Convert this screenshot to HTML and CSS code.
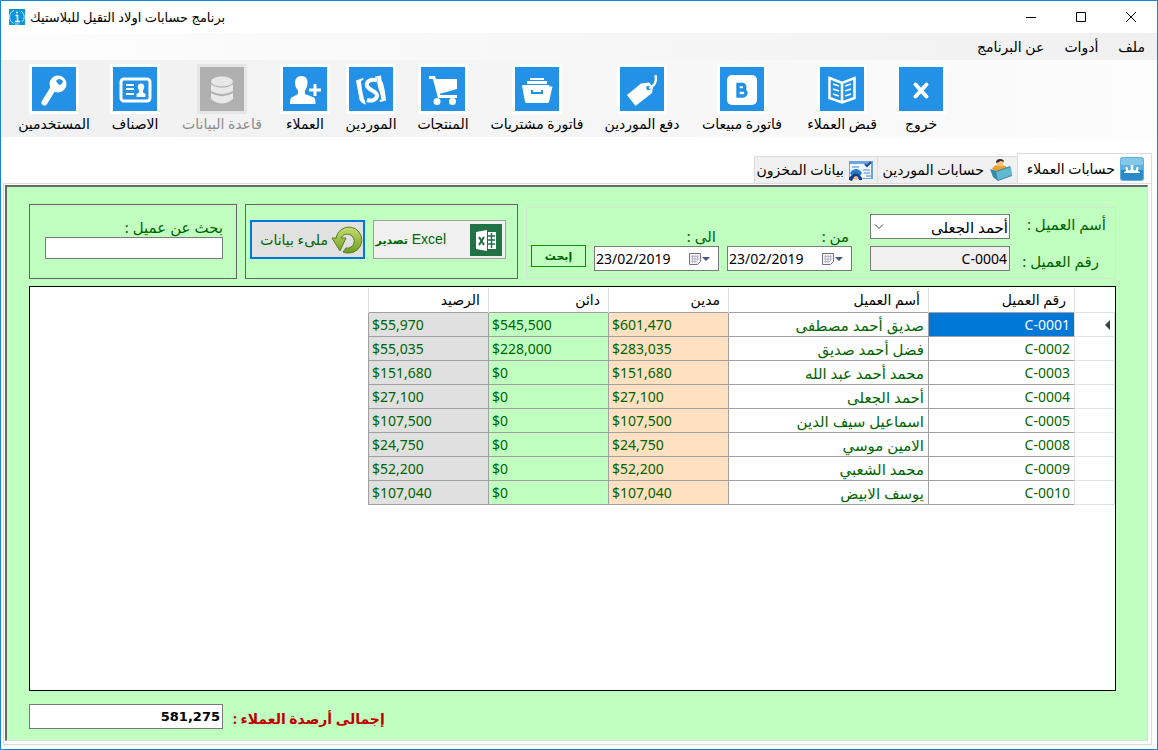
FILE: index.html
```html
<!DOCTYPE html>
<html lang="ar" dir="rtl">
<head>
    <meta charset="UTF-8">
    <meta name="viewport" content="width=device-width, initial-scale=1.0">
    <title>برنامج حسابات اولاد التقيل للبلاستيك</title>
    <link rel="stylesheet" href="styles.css">
</head>
<body>
<div class="window">
    <header class="titlebar" dir="ltr">
        <svg class="app-icon" viewBox="0 0 16 16">
            <rect width="16" height="16" fill="#0a94dc"/>
            <path d="M5 1.500A7 7 0 0 0 5 14.500M6 15h4M12 2a7 7 0 0 1 1 11" fill="none" stroke="#bfe6fa"/>
            <path d="M7 3.500h2M6.500 6.500H8.500V12M6 12.500h5" fill="none" stroke="#fff" stroke-width="1.500"/>
        </svg>
        <h1 class="title" dir="rtl">برنامج حسابات اولاد التقيل للبلاستيك</h1>
        <div class="win-btns">
            <button type="button" aria-label="تصغير"><svg viewBox="0 0 12 12"><path d="M1 6.500h10"/></svg></button>
            <button type="button" aria-label="تكبير"><svg viewBox="0 0 12 12"><path d="M1.500 1.500h9v9h-9z"/></svg></button>
            <button type="button" aria-label="إغلاق"><svg viewBox="0 0 12 12"><path d="M1 1l10 10M11 1L1 11"/></svg></button>
        </div>
    </header>

    <nav class="menubar">
        <a href="#">ملف</a>
        <a href="#">أدوات</a>
        <a href="#">عن البرنامج</a>
    </nav>

    <div class="toolbar">
        <button type="button" class="tool">
            <svg viewBox="0 0 44 44"><path d="M16.500 17.500l11 12M27.500 17.500l-11 12" stroke="#fff" stroke-width="4" stroke-linecap="round"/></svg>
            <span>خروج</span>
        </button>
        <button type="button" class="tool">
            <svg viewBox="0 0 44 44"><path d="M9.500 11l12.500 5 12.500-5v20L22 35.500 9.500 31zM22 16v19" fill="none" stroke="#fff" stroke-width="2.500"/><path d="M13 17l6 2M13 22l6 2M13 27l6 2M31 17l-6 2M31 22l-6 2M31 27l-6 2" stroke="#fff" stroke-width="1.800"/></svg>
            <span>قبض العملاء</span>
        </button>
        <button type="button" class="tool">
            <svg viewBox="0 0 44 44"><rect x="7" y="8" width="30" height="30" rx="5" fill="#fff"/><path d="M18 17.500h4.500a2.800 2.800 0 0 1 0 5.500H18zM18 23h5a3 3 0 0 1 0 6H18z" fill="none" stroke="#2391e6" stroke-width="3.400"/></svg>
            <span>فاتورة مبيعات</span>
        </button>
        <button type="button" class="tool">
            <svg viewBox="0 0 44 44"><path d="M7 28l14-11.500 8-1 4 4.500-1 6-16.500 13z" fill="#fff"/><circle cx="28.500" cy="21" r="2.300" fill="#2391e6"/><path d="M29 21c6-2 8-6 6.500-13" fill="none" stroke="#fff" stroke-width="2.200"/></svg>
            <span>دفع الموردين</span>
        </button>
        <button type="button" class="tool">
            <svg viewBox="0 0 44 44"><path d="M15 11h14v2H15zM12 14h20v3H12zM10 18h24l.500 1.500h3L34 35q-.500 1-1.500 1h-21q-1 0-1.500-1L7 18.500 8.500 18z" fill="#fff"/><path d="M17 23v3h10v-3" fill="none" stroke="#2391e6" stroke-width="2"/></svg>
            <span>فاتورة مشتريات</span>
        </button>
        <button type="button" class="tool">
            <svg viewBox="0 0 44 44"><path d="M14 12h22v10l-18 5z" fill="#fff"/><path d="M8 10.500h5l5 19H36" fill="none" stroke="#fff" stroke-width="2.800"/><circle cx="16" cy="34.500" r="3.500" fill="#fff"/><circle cx="31.500" cy="34.500" r="3.500" fill="#fff"/></svg>
            <span>المنتجات</span>
        </button>
        <button type="button" class="tool">
            <svg viewBox="0 0 44 44"><path d="M7 13.500l7-2.500.500 1.500-2.500 1.500 1 9q1 7 4 14.500-5-1-6.500-5zM26 9.500l6-1q0 5 2 8 2 6 3 17l-6 1.500-.500-1.500 2-1q-1-7-3-11-2-5-1-10.500l-2.500-.500z" fill="#fff"/><path d="M28 13.500c-6-2-11 1-10 5 1 5 10 5 10 10 0 4-5 6-10 4.500" fill="none" stroke="#fff" stroke-width="4"/></svg>
            <span>الموردين</span>
        </button>
        <button type="button" class="tool">
            <svg viewBox="0 0 44 44"><path d="M18 9c5 0 7 3 6.500 8-.300 3-1.500 5-2.500 6.500V27l9 3.500q1.500 1 1.500 6.500H7q0-5.500 1.500-6.500L15 27v-3.500C13 21 12 19 12 16c0-4 2-7 6-7z" fill="#fff"/><path d="M26 23h12M32 17v12" stroke="#fff" stroke-width="3"/></svg>
            <span>العملاء</span>
        </button>
        <button type="button" class="tool" disabled>
            <svg viewBox="0 0 44 44"><ellipse cx="22" cy="14.500" rx="11" ry="5" fill="#e8e8e8"/><path d="M11 17.500q11 6.500 22 0V24q-11 6.500-22 0zM11 26q11 6.500 22 0v6q-11 9-22 0z" fill="#e8e8e8"/></svg>
            <span>قاعدة البيانات</span>
        </button>
        <button type="button" class="tool">
            <svg viewBox="0 0 44 44"><rect x="8" y="12" width="29" height="22" rx="3" fill="none" stroke="#fff" stroke-width="3"/><path d="M13 18h8M13 22h8M13 27h8" stroke="#fff" stroke-width="2"/><path d="M28 16.500c2.500 0 3.500 2 3.200 4l-1.200 3v2l2.500 1.500V30h-9v-3l2.500-1.500v-2l-1.200-3c-.300-2 .700-4 3.200-4z" fill="#fff"/></svg>
            <span>الاصناف</span>
        </button>
        <button type="button" class="tool">
            <svg viewBox="0 0 44 44"><circle cx="26" cy="17" r="8.500" fill="#fff"/><path d="M22 20L12.500 35.500" stroke="#fff" stroke-width="6" stroke-linecap="round"/><path d="M24 14q3-4 7 0-1 4-4 4z" fill="#2391e6"/></svg>
            <span>المستخدمين</span>
        </button>
    </div>

    <nav class="tabs">
        <button type="button" class="tab active">
            <svg viewBox="0 0 24 24"><rect width="24" height="24" rx="3" fill="#5eb1df"/><path d="M1 13h22v8q0 2-2 2H3q-2 0-2-2z" fill="#2c89c8"/><path d="M1 3q0-2 2-2h18q2 0 2 2v5H1z" fill="#84c9e8"/><path d="M4 15l2-1-.500-4h2l.500 3 1.500.500L11 12l-.500-4h3L13 12l1.500 1.500L16 13l.500-3h2l-.500 4 2 1v1H4z" fill="#fff"/></svg>
            <span>حسابات العملاء</span>
        </button>
        <button type="button" class="tab">
            <svg viewBox="0 0 24 24"><path d="M3 11q3-5 9-4l5 1v8l-8 2z" fill="#eda22b"/><circle cx="11" cy="5" r="3.500" fill="#f1c08b"/><path d="M7 5q0-4 4-4t4 3q-4-2-5 0z" fill="#322c28"/><path d="M1 11l6 2 14-5 2 10-14 5-5-4z" fill="#328bad"/><path d="M7 14l15-5 1 8-14 5z" fill="#63b7cf"/></svg>
            <span>حسابات الموردين</span>
        </button>
        <button type="button" class="tab">
            <svg viewBox="0 0 24 24"><path d="M0 3h24v18H0z" fill="#6ca4df"/><path d="M1 6h21v14H1z" fill="#eef6ff"/><path d="M3 9h7M14 12h7M15 15h6M17 18h5" stroke="#4e82d0"/><path d="M16 6l2 2 4-4" fill="none" stroke="#204f9d" stroke-width="2"/><path d="M1 15q6-8 12 0l-2 3H3z" fill="#2478c8"/><path d="M0 20q7-9 13 0v2h-3l-1-3H5l-2 4-3-1z" fill="#123f82"/><circle cx="7" cy="20" r="2" fill="#f3b68d"/></svg>
            <span>بيانات المخزون</span>
        </button>
    </nav>

    <main class="page">
        <div class="panel">
            <form class="filters">
                <div class="group client">
                    <div class="fields">
                        <label for="name">أسم العميل :</label>
                        <div class="combo">
                            <select id="name">
                                <option>أحمد الجعلى</option>
                            </select>
                            <svg viewBox="0 0 10 6"><path d="M1 .500l4 4 4-4"/></svg>
                        </div>
                        <label for="number" class="inset">رقم العميل :</label>
                        <input id="number" class="box readonly" type="text" value="C-0004" readonly>
                    </div>
                    <div class="date">
                        <label for="from">من :</label>
                        <div class="picker" dir="ltr">
                            <input id="from" type="text" value="23/02/2019">
                            <button type="button" aria-label="التقويم">
                                <svg viewBox="0 0 22 14"><path d="M.500 1.500h11v8l-3 3h-8z" fill="#f4f4f8" stroke="#77717a"/><path d="M2 4.500h8M2 7h8M2 9.500h6M3.500 3v8M6 3v8M8.500 3v6" stroke="#b9b9c8"/><path d="M13 5h8l-4 4z" fill="#46587f"/></svg>
                            </button>
                        </div>
                    </div>
                    <div class="date">
                        <label for="to">الى :</label>
                        <div class="picker" dir="ltr">
                            <input id="to" type="text" value="23/02/2019">
                            <button type="button" aria-label="التقويم">
                                <svg viewBox="0 0 22 14"><path d="M.500 1.500h11v8l-3 3h-8z" fill="#f4f4f8" stroke="#77717a"/><path d="M2 4.500h8M2 7h8M2 9.500h6M3.500 3v8M6 3v8M8.500 3v6" stroke="#b9b9c8"/><path d="M13 5h8l-4 4z" fill="#46587f"/></svg>
                            </button>
                        </div>
                    </div>
                    <button type="button" class="find">إبحث</button>
                </div>

                <div class="group actions">
                    <button type="button" class="export">
                        <svg viewBox="0 0 32 32"><rect width="32" height="32" fill="#217346"/><path d="M6 8l11-2v21L6 25zM18 8h8v17h-8z" fill="#fff"/><path d="M9 13l5 8M14 13l-5 8" stroke="#217346" stroke-width="2"/><path d="M18 12h7M18 16h7M18 20h7M21.500 9v15" stroke="#217346" stroke-width="1.500"/></svg>
                        <span dir="ltr"><b>تصدير</b> Excel</span>
                    </button>
                    <button type="button" class="fill">
                        <svg viewBox="0 0 32 30">
                            <defs>
                                <linearGradient id="green" x1="0" y1="0" x2="0" y2="1">
                                    <stop offset="0" stop-color="#c5dd72"/>
                                    <stop offset="1" stop-color="#6f9c1c"/>
                                </linearGradient>
                            </defs>
                            <path d="M5 13A13 13 0 1 1 17 28q-3 0-5-1l3-4a7 7 0 1 0-5-10h5L9 26 1 13z" fill="url(#green)" stroke="#5c7d22"/>
                        </svg>
                        <span>ملىء بيانات</span>
                    </button>
                </div>

                <div class="group search">
                    <label for="search">بحث عن عميل :</label>
                    <input id="search" class="box" type="text">
                </div>
            </form>

            <div class="grid">
                <table>
                    <colgroup>
                        <col class="c-mark"><col class="c-id"><col class="c-name"><col class="c-sum"><col class="c-sum"><col class="c-sum">
                    </colgroup>
                    <thead>
                    <tr><th></th><th>رقم العميل</th><th>أسم العميل</th><th>مدين</th><th>دائن</th><th>الرصيد</th></tr>
                    </thead>
                    <tbody>
                    <tr><td class="mark"><i></i></td><td class="id selected">C-0001</td><td>صديق أحمد مصطفى</td><td class="debit">$601,470</td><td class="credit">$545,500</td><td class="balance">$55,970</td></tr>
                    <tr><td class="mark"></td><td class="id">C-0002</td><td>فضل أحمد صديق</td><td class="debit">$283,035</td><td class="credit">$228,000</td><td class="balance">$55,035</td></tr>
                    <tr><td class="mark"></td><td class="id">C-0003</td><td>محمد أحمد عبد الله</td><td class="debit">$151,680</td><td class="credit">$0</td><td class="balance">$151,680</td></tr>
                    <tr><td class="mark"></td><td class="id">C-0004</td><td>أحمد الجعلى</td><td class="debit">$27,100</td><td class="credit">$0</td><td class="balance">$27,100</td></tr>
                    <tr><td class="mark"></td><td class="id">C-0005</td><td>اسماعيل سيف الدين</td><td class="debit">$107,500</td><td class="credit">$0</td><td class="balance">$107,500</td></tr>
                    <tr><td class="mark"></td><td class="id">C-0008</td><td>الامين موسي</td><td class="debit">$24,750</td><td class="credit">$0</td><td class="balance">$24,750</td></tr>
                    <tr><td class="mark"></td><td class="id">C-0009</td><td>محمد الشعبي</td><td class="debit">$52,200</td><td class="credit">$0</td><td class="balance">$52,200</td></tr>
                    <tr><td class="mark"></td><td class="id">C-0010</td><td>يوسف الابيض</td><td class="debit">$107,040</td><td class="credit">$0</td><td class="balance">$107,040</td></tr>
                    </tbody>
                </table>
            </div>

            <div class="total">
                <label for="total">إجمالى أرصدة العملاء :</label>
                <input id="total" class="box" type="text" value="581,275" readonly>
            </div>
        </div>
    </main>
</div>
</body>
</html>
```
FILE: styles.css
```css
* {
    box-sizing: border-box;
}

body {
    margin: 0;
    font: 14px/20px "Noto Sans", "DejaVu Sans", sans-serif;
    color: #000;
    background: #fff;
}

button,
input,
select {
    margin: 0;
    padding: 0;
    font: inherit;
    color: inherit;
    border: 0;
    border-radius: 0;
    background: none;
}

svg {
    display: block;
    flex: none;
}

.window {
    display: flex;
    flex-direction: column;
    min-height: 100vh;
    border: 1px solid #1883d7;
}

/* title bar */
.titlebar {
    display: flex;
    align-items: center;
    height: 32px;
    padding: 0 1px 0 8px;
}

.app-icon {
    width: 16px;
    height: 16px;
}

.title {
    margin: 0 5px;
    font-size: 13px;
    font-weight: normal;
}

.win-btns {
    display: flex;
    margin-left: auto;
}

.win-btns button {
    display: flex;
    align-items: center;
    justify-content: center;
    width: 50px;
    height: 30px;
}

.win-btns svg {
    width: 12px;
    height: 12px;
    fill: none;
    stroke: #000;
}

/* menu and tools */
.menubar {
    display: flex;
    gap: 20px;
    height: 27px;
    padding: 4px 12px;
    background: linear-gradient(to right, #fdfdfd, #f0f0f0);
}

.menubar a {
    color: #000;
    text-decoration: none;
}

.toolbar {
    display: grid;
    grid-template-columns: 58px 100px 100px 100px 110px 78px 66px 66px 100px 74px 88px;
    justify-content: end;
    height: 77px;
    padding: 4px 0 0 9px;
    background: linear-gradient(to right, #f0f0f0, #fcfcfc);
}

.tool {
    display: flex;
    flex-direction: column;
    align-items: center;
    white-space: nowrap;
}

.tool svg {
    width: 50px;
    height: 50px;
    border: 3px solid #fff;
    background: #2391e6;
}

.tool:disabled {
    color: #8c8c8c;
}

.tool:disabled svg {
    border-color: #e6e6e6;
    background: #b0b0b0;
}

/* tabs */
.tabs {
    display: flex;
    align-items: flex-end;
    height: 46px;
    padding: 0 5px;
}

.tab {
    display: flex;
    align-items: center;
    gap: 5px;
    width: 123px;
    height: 27px;
    padding: 0 4px;
    border: 1px solid #dcdcdc;
    border-width: 1px 0 0 1px;
    background: #f0f0f0;
    white-space: nowrap;
}

.tab:nth-child(2) {
    width: 140px;
}

.tab.active {
    width: 135px;
    height: 30px;
    padding: 0 7px;
    border-right-width: 1px;
    background: #fff;
}

.tab svg {
    width: 24px;
    height: 24px;
}

.page {
    flex: 1;
    display: flex;
    margin: 0 5px 4px 2px;
    padding: 1px 3px 3px 1px;
    border: 1px solid #dcdcdc;
}

.panel {
    flex: 1;
    display: flex;
    flex-direction: column;
    padding: 17px 31px 11px 22px;
    border: 1px solid #dcdcdc;
    border-top: 2px solid #696969;
    border-left: 2px solid #696969;
    background: #c0ffc0;
    color: #006400;
}

/* filters */
.filters {
    display: flex;
    align-items: stretch;
    gap: 8px;
    height: 75px;
}

.group {
    border: 1px solid #646464;
}

.client {
    flex: 1;
    display: flex;
    align-items: flex-end;
    gap: 8px;
    margin-top: 3px;
    padding: 6px 9px 7px 0;
    border-color: #d2e6d2;
}

.fields {
    display: grid;
    grid-template-columns: 86px 140px;
    gap: 7px 10px;
    align-items: start;
    margin-left: 10px;
}

.fields .inset {
    align-self: end;
    padding-right: 7px;
}

.client label,
.search label {
    font-size: 15px;
    white-space: nowrap;
}

.box,
.combo select,
.picker {
    height: 25px;
    border: 1px solid #7a7a7a;
    background: #fff;
    color: #000;
}

.box {
    padding: 0 2px;
}

.readonly {
    width: 140px;
    background: #f0f0f0;
}

.combo {
    position: relative;
}

.combo select {
    width: 100%;
    padding: 0 1px;
    appearance: none;
    font-size: 15px;
}

.combo svg {
    position: absolute;
    left: 4px;
    top: 10px;
    width: 10px;
    height: 6px;
    fill: none;
    stroke: #444;
    pointer-events: none;
}

.date label {
    display: block;
    padding-right: 3px;
}

.picker {
    display: flex;
    align-items: center;
    width: 125px;
}

.picker input {
    flex: 1;
    min-width: 0;
    padding-left: 1px;
}

.picker svg {
    width: 22px;
    height: 14px;
    margin-right: 7px;
}

.find {
    width: 55px;
    height: 22px;
    margin-bottom: 4px;
    border: 1px solid #008c00;
    font-size: 11px;
    font-weight: bold;
    line-height: 20px;
}

.actions {
    display: flex;
    align-items: flex-start;
    gap: 8px;
    width: 273px;
    padding: 15px 11px 0 4px;
}

.actions button {
    display: flex;
    align-items: center;
    height: 39px;
    white-space: nowrap;
}

.actions .export {
    width: 133px;
    gap: 24px;
    padding-right: 3px;
    border: 1px solid #a0a0a0;
    background: #f0f0f0;
}

.export span {
    font-family: "Liberation Sans", "DejaVu Sans", sans-serif;
}

.export b {
    font-size: 11px;
}

.export svg {
    width: 32px;
    height: 32px;
}

.fill {
    width: 115px;
    gap: 3px;
    border: 2px solid #0078d7;
    background: #e1e1e1;
}

.fill svg {
    width: 32px;
    height: 30px;
}

.search {
    display: flex;
    flex-direction: column;
    width: 208px;
    padding: 12px 13px 0 15px;
}

.search .box {
    height: 22px;
}

/* accounts table */
.grid {
    flex: 1;
    margin-top: 7px;
    padding-top: 1px;
    border: 1px solid #000;
    background: #fff;
}

.grid table {
    width: 747px;
    table-layout: fixed;
    border-collapse: collapse;
}

.c-mark {
    width: 40px;
}

.c-id {
    width: 146px;
}

.c-name {
    width: 200px;
}

.c-sum {
    width: 120px;
}

.grid tr {
    height: 24px;
}

.grid th {
    padding: 2px 8px;
    border-left: 1px solid #e1e1e1;
    color: #000;
    font-weight: normal;
    text-align: right;
}

.grid td {
    padding: 2px 4px 1px 3px;
    border: 1px solid #a0a0a0;
    font-size: 15px;
    white-space: nowrap;
}

.grid .mark {
    border-color: #e1e1e1;
}

.mark i {
    display: block;
    width: 0;
    border: 5px solid transparent;
    border-right-color: #404040;
    border-left-width: 0;
}

.grid .id,
.grid .debit,
.grid .credit,
.grid .balance {
    font-size: 14px;
}

.selected {
    background: #0078d7;
    color: #fff;
}

.debit,
.credit,
.balance {
    direction: ltr;
    text-align: left;
}

.debit {
    background: #ffe0c0;
}

.credit {
    background: #c0ffc0;
}

.balance {
    background: #e0e0e0;
}

/* total */
.total {
    display: flex;
    justify-content: flex-end;
    align-items: flex-end;
    gap: 10px;
    margin-top: 13px;
    font-weight: bold;
}

.total label {
    color: #c00000;
}

.total .box {
    width: 194px;
    font-family: "DejaVu Sans", sans-serif;
    font-size: 13px;
}
```
